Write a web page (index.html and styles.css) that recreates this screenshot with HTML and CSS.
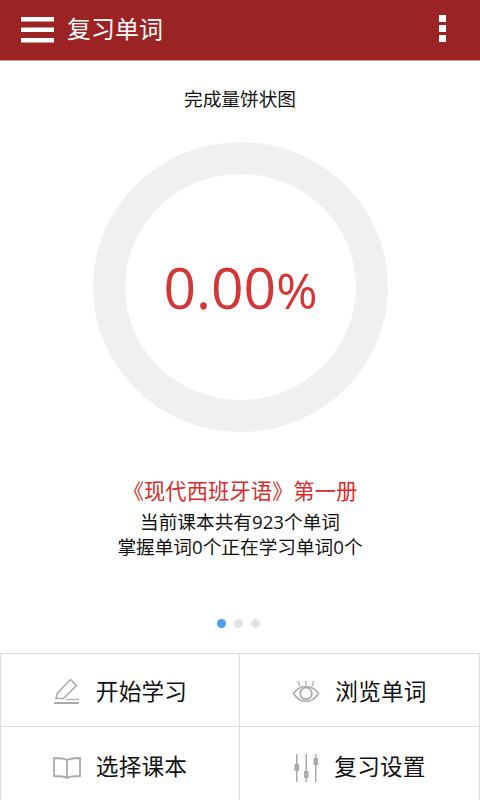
FILE: index.html
```html
<!DOCTYPE html>
<html lang="zh">
<head>
<meta charset="utf-8">
<title>复习单词</title>
<link rel="stylesheet" href="styles.css">
</head>
<body>
<header class="bar">
  <svg class="menu" width="34" height="26" viewBox="0 0 34 26"><path d="M0 0h33v4.500H0zM0 10.500h33v4.500H0zM0 21h33v4.500H0z" fill="#fff"/></svg>
  <h1 class="title">复习单词</h1>
  <div class="more"><i></i><i></i><i></i></div>
</header>
<main class="main">
  <p class="chart-title">完成量饼状图</p>
  <div class="ring">
    <div class="value">0.00<span class="pct">%</span></div>
  </div>
  <p class="book">《现代西班牙语》第一册</p>
  <p class="info">当前课本共有923个单词</p>
  <p class="info">掌握单词0个正在学习单词0个</p>
  <div class="dots"><i class="dot on"></i><i class="dot"></i><i class="dot"></i></div>
</main>
<nav class="grid">
  <div class="cell">
    <svg class="icon" width="28" height="28" viewBox="0 0 28 28" fill="none" stroke="#aaa" stroke-width="1.500"><path d="M3 20.500 4.500 15 17.500 1.500l6 6L10.500 20.500z"/><path d="M1 25h25" stroke-width="2"/><path d="M13 21.500h13" stroke-width="1.200"/></svg>
    <span class="label">开始学习</span>
  </div>
  <div class="cell">
    <svg class="icon" width="28" height="24" viewBox="0 0 28 24" fill="none" stroke="#aaa" stroke-width="1.500"><path d="M1.500 13.500C5 8.500 9 6.500 14 6.500s9 2 12.500 7C23 19 19 21.500 14 21.500S5 19 1.500 13.500z"/><circle cx="14" cy="13.500" r="5.800" stroke-width="1.800"/><path d="M6 1 8 6M14 1v4.500M22 1 20 6" stroke-width="1.300"/></svg>
    <span class="label">浏览单词</span>
  </div>
  <div class="cell">
    <svg class="icon" width="28" height="22" viewBox="0 0 28 22" fill="none" stroke="#aaa" stroke-width="1.800"><path d="M14 3C11 1.500 6 1 1 1v18c5 0 10 0 13 2 3-2 8-2 13-2V1c-5 0-10 .5-13 2zM14 3v18"/></svg>
    <span class="label">选择课本</span>
  </div>
  <div class="cell">
    <svg class="icon" width="26" height="28" viewBox="0 0 26 28" fill="#aaa"><path d="M3 0h1.500v10H6v7H4.500v11H3V17H1.500v-7H3zM12.500 0H14v17h1.500v7H14v4h-1.500v-4H11v-7h1.500zM22 0h1.500v4H25v7h-1.500v17H22V11h-1.500V4H22z"/></svg>
    <span class="label">复习设置</span>
  </div>
</nav>
</body>
</html>
```
FILE: styles.css
```css
* { box-sizing: border-box; }
html, body { margin: 0; padding: 0; }
body {
  width: 480px;
  height: 800px;
  overflow: hidden;
  background: #fff;
  display: flex;
  flex-direction: column;
  font-family: "Open Sans", "Noto Sans CJK SC", sans-serif;
  color: #111;
}
.bar {
  height: 61px;
  flex: none;
  background: #9c2323;
  border-bottom: 1px solid #d99a9a;
  display: flex;
  align-items: center;
  padding: 0 32px 0 21px;
}
.menu { flex: none; margin-right: 13px; margin-top: -1px; }
.title {
  margin: 0 0 3px -1px;
  flex: 1;
  font-size: 24px;
  font-weight: 400;
  color: #fff;
  line-height: 1;
}
.more { display: flex; flex-direction: column; gap: 3px; margin-top: -3px; margin-right: 2px; }
.more i { display: block; width: 7px; height: 7px; background: #fff; }
.main {
  flex: 1;
  display: flex;
  flex-direction: column;
  align-items: center;
}
.chart-title {
  margin: 25px 0 0;
  font-size: 18.670px;
  line-height: 26px;
  height: 26px;
  color: #111;
}
.ring {
  width: 295px;
  height: 290px;
  margin: 30px 0 0 1px;
  border: 32px solid #f0f0f2;
  border-radius: 50%;
  display: flex;
  align-items: center;
  justify-content: center;
}
.value {
  font-size: 57px;
  line-height: 1;
  color: #d43535;
  margin-top: 1px;
}
.pct { font-size: 50px; }
.book {
  margin: 45px 0 0;
  font-size: 21.330px;
  line-height: 28px;
  color: #d92b2b;
}
.info {
  margin: 0;
  font-size: 18.670px;
  line-height: 25px;
  color: #111;
}
.book + .info { margin-top: 4px; }
.dots { display: flex; gap: 8px; margin: 60px 4px 0 0; }
.dot { display: block; width: 9px; height: 9px; border-radius: 50%; background: #e4e4e4; }
.dot.on { background: #4a9df5; }
.grid {
  flex: none;
  height: 147px;
  display: grid;
  grid-template-columns: 239px 239px;
  grid-template-rows: 73px 74px;
  border-top: 1px solid #dedede;
  border-left: 1px solid #dedede;
  border-right: 1px solid #dedede;
}
.cell {
  display: flex;
  align-items: center;
  justify-content: center;
  gap: 15px;
  padding-top: 4px;
}
.cell:nth-child(n+3) { padding-top: 7px; }
.cell:nth-child(odd) { border-right: 1px solid #dedede; }
.cell:nth-child(-n+2) { border-bottom: 1px solid #dedede; }
.icon { flex: none; }
.label {
  font-size: 22.670px;
  letter-spacing: 0.2px;
  color: #111;
  line-height: 1;
}
```
